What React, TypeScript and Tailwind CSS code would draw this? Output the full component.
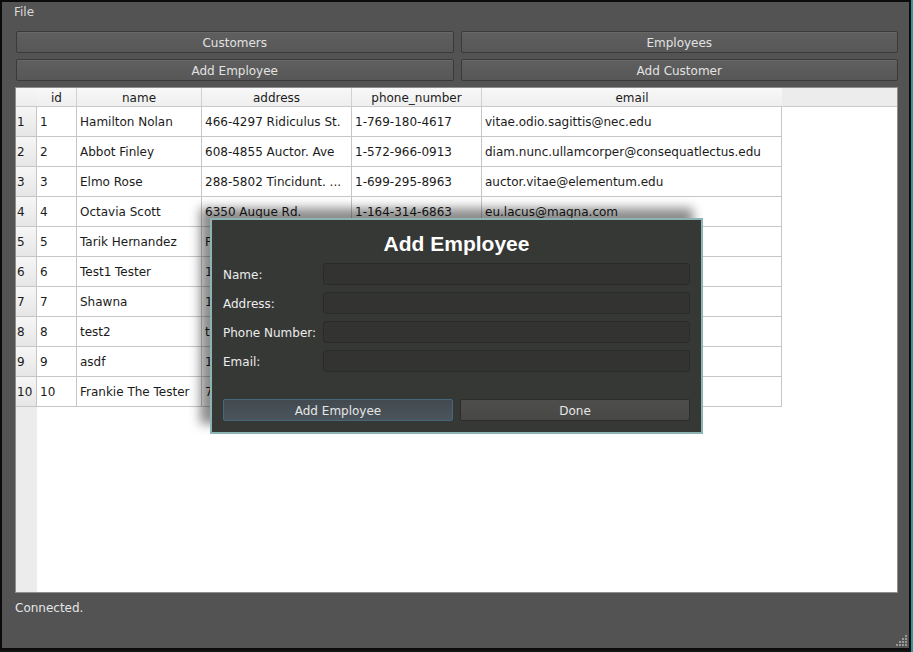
import React from "react";

const cols = [
  { key: "id", w: "w-[40px]" },
  { key: "name", w: "w-[125px]" },
  { key: "address", w: "w-[150px]" },
  { key: "phone_number", w: "w-[130px]" },
  { key: "email", w: "w-[300px]" },
];

const rows: string[][] = [
  ["1", "Hamilton Nolan", "466-4297 Ridiculus St.", "1-769-180-4617", "vitae.odio.sagittis@nec.edu"],
  ["2", "Abbot Finley", "608-4855 Auctor. Ave", "1-572-966-0913", "diam.nunc.ullamcorper@consequatlectus.edu"],
  ["3", "Elmo Rose", "288-5802 Tincidunt. ...", "1-699-295-8963", "auctor.vitae@elementum.edu"],
  ["4", "Octavia Scott", "6350 Augue Rd.", "1-164-314-6863", "eu.lacus@magna.com"],
  ["5", "Tarik Hernandez", "P.O. Box 412", "1-521-770-3302", "tarik@nec.org"],
  ["6", "Test1 Tester", "123 Test St.", "123-456-7890", "test@test.com"],
  ["7", "Shawna", "1234 Main St.", "1-555-555-5555", "shawna@mail.com"],
  ["8", "test2", "test", "1234567", "test2@test.com"],
  ["9", "asdf", "123 asdf", "123-4567", "asdf@asdf.com"],
  ["10", "Frankie The Tester", "777 Tester Ln.", "1-777-777-7777", "frankie@test.com"],
];

function MainButton({ label }: { label: string }) {
  return (
    <button className="h-[22px] pt-[1px] border border-[#3a3a3a] rounded-[2px] bg-gradient-to-b from-[#5f5f5f] to-[#575757] shadow-[inset_0_1px_0_#686868] text-[#e2e2e2] text-[12px] leading-[14px] flex items-center justify-center">
      {label}
    </button>
  );
}

function Field({ label }: { label: string }) {
  return (
    <div className="flex items-center h-[22px]">
      <div className="w-[100px] pt-[1px] leading-[14px] text-[#ececec] whitespace-nowrap">{label}</div>
      <div className="flex-1 h-[22px] rounded-[3px] border border-[#2a2b29] bg-[#333432]" />
    </div>
  );
}

export default function App() {
  return (
    <div className="relative w-[913px] h-[652px] bg-[#141414] flex font-['DejaVu_Sans',sans-serif] text-[12px] overflow-hidden">
      <div className="relative w-[911px] h-[650px] border-2 border-[#0b0b0b] bg-[#535353] flex flex-col">
        {/* menu bar */}
        <div className="h-[20px] pl-[12px] flex items-center text-[#d8d8d8] leading-[14px]">File</div>

        <div className="pl-[13px] w-[896px] flex flex-col">
          <div className="mt-[9px] ml-[1px] grid grid-cols-2 gap-x-[7px] gap-y-[6px]">
            <MainButton label="Customers" />
            <MainButton label="Employees" />
            <MainButton label="Add Employee" />
            <MainButton label="Add Customer" />
          </div>

          {/* table */}
          <div className="mt-[6px] h-[506px] border border-[#8e8e8e] bg-white flex flex-col overflow-hidden text-[#1b1b1b]">
            <div className="h-[19px] flex bg-[#ececec] border-b border-[#cacaca] shrink-0">
              <div className="w-[21px] h-full bg-gradient-to-b from-[#f7f7f7] to-[#ececec]" />
              {cols.map((c, i) => (
                <div
                  key={c.key}
                  className={`${c.w} h-full ${i < cols.length - 1 ? "border-r border-[#d2d2d2]" : ""} bg-gradient-to-b from-[#f8f8f8] to-[#efefef] flex items-center justify-center pt-[1px] leading-[14px]`}
                >
                  {c.key}
                </div>
              ))}
            </div>
            <div className="flex-1 flex">
              <div className="w-[21px] flex flex-col bg-[#ececec]">
                {rows.map((r) => (
                  <div
                    key={r[0]}
                    className="h-[30px] border-b border-r border-[#c6c6c6] bg-gradient-to-b from-[#f6f6f6] to-[#e6e6e6] flex items-center pl-[1px] leading-[14px]"
                  >
                    {r[0]}
                  </div>
                ))}
              </div>
              <div className="flex flex-col">
                {rows.map((r) => (
                  <div key={r[0]} className="h-[30px] flex">
                    {r.map((v, i) => (
                      <div
                        key={i}
                        className={`${cols[i].w} h-full border-r border-b border-[#c6c6c6] flex items-center pl-[3px] whitespace-nowrap overflow-hidden leading-[14px]`}
                      >
                        {v}
                      </div>
                    ))}
                  </div>
                ))}
              </div>
            </div>
          </div>

          <div className="mt-[8px] text-[#e6e6e6] leading-[14px]">Connected.</div>
        </div>

        {/* size grip */}
        <svg className="absolute right-[1px] bottom-[1px]" width="12" height="12" viewBox="0 0 12 12">
          {[
            [9, 0],
            [6, 3], [9, 3],
            [3, 6], [6, 6], [9, 6],
            [0, 9], [3, 9], [6, 9], [9, 9],
          ].map(([x, y], i) => (
            <rect key={i} x={x} y={y} width="2" height="2" fill="#9a9a9a" />
          ))}
        </svg>
      </div>
      <div className="w-[2px] h-full bg-[#2b9a9c]" />

      {/* dialog */}
      <div className="absolute left-[210px] top-[218px] w-[493px] h-[216px] border-2 border-[#8db4b4] bg-[#363835] shadow-[-10px_-10px_10px_rgba(0,0,0,0.45)] flex flex-col px-[11px]">
        <div className="mt-[10px] h-[28px] flex items-center justify-center text-white font-['Liberation_Sans',sans-serif] font-bold text-[21px]">
          Add Employee
        </div>
        <div className="mt-[5px] flex flex-col gap-[7px]">
          <Field label="Name:" />
          <Field label="Address:" />
          <Field label="Phone Number:" />
          <Field label="Email:" />
        </div>
        <div className="mt-[27px] grid grid-cols-2 gap-x-[7px]">
          <button className="h-[22px] pt-[1px] leading-[14px] rounded-[2px] border border-[#45687d] bg-gradient-to-b from-[#424a50] to-[#4a545a] text-[#e6e6e6] flex items-center justify-center">
            Add Employee
          </button>
          <button className="h-[22px] pt-[1px] leading-[14px] rounded-[2px] border border-[#2c2d2b] bg-gradient-to-b from-[#4e4f4c] to-[#474846] text-[#e6e6e6] flex items-center justify-center">
            Done
          </button>
        </div>
      </div>
    </div>
  );
}
